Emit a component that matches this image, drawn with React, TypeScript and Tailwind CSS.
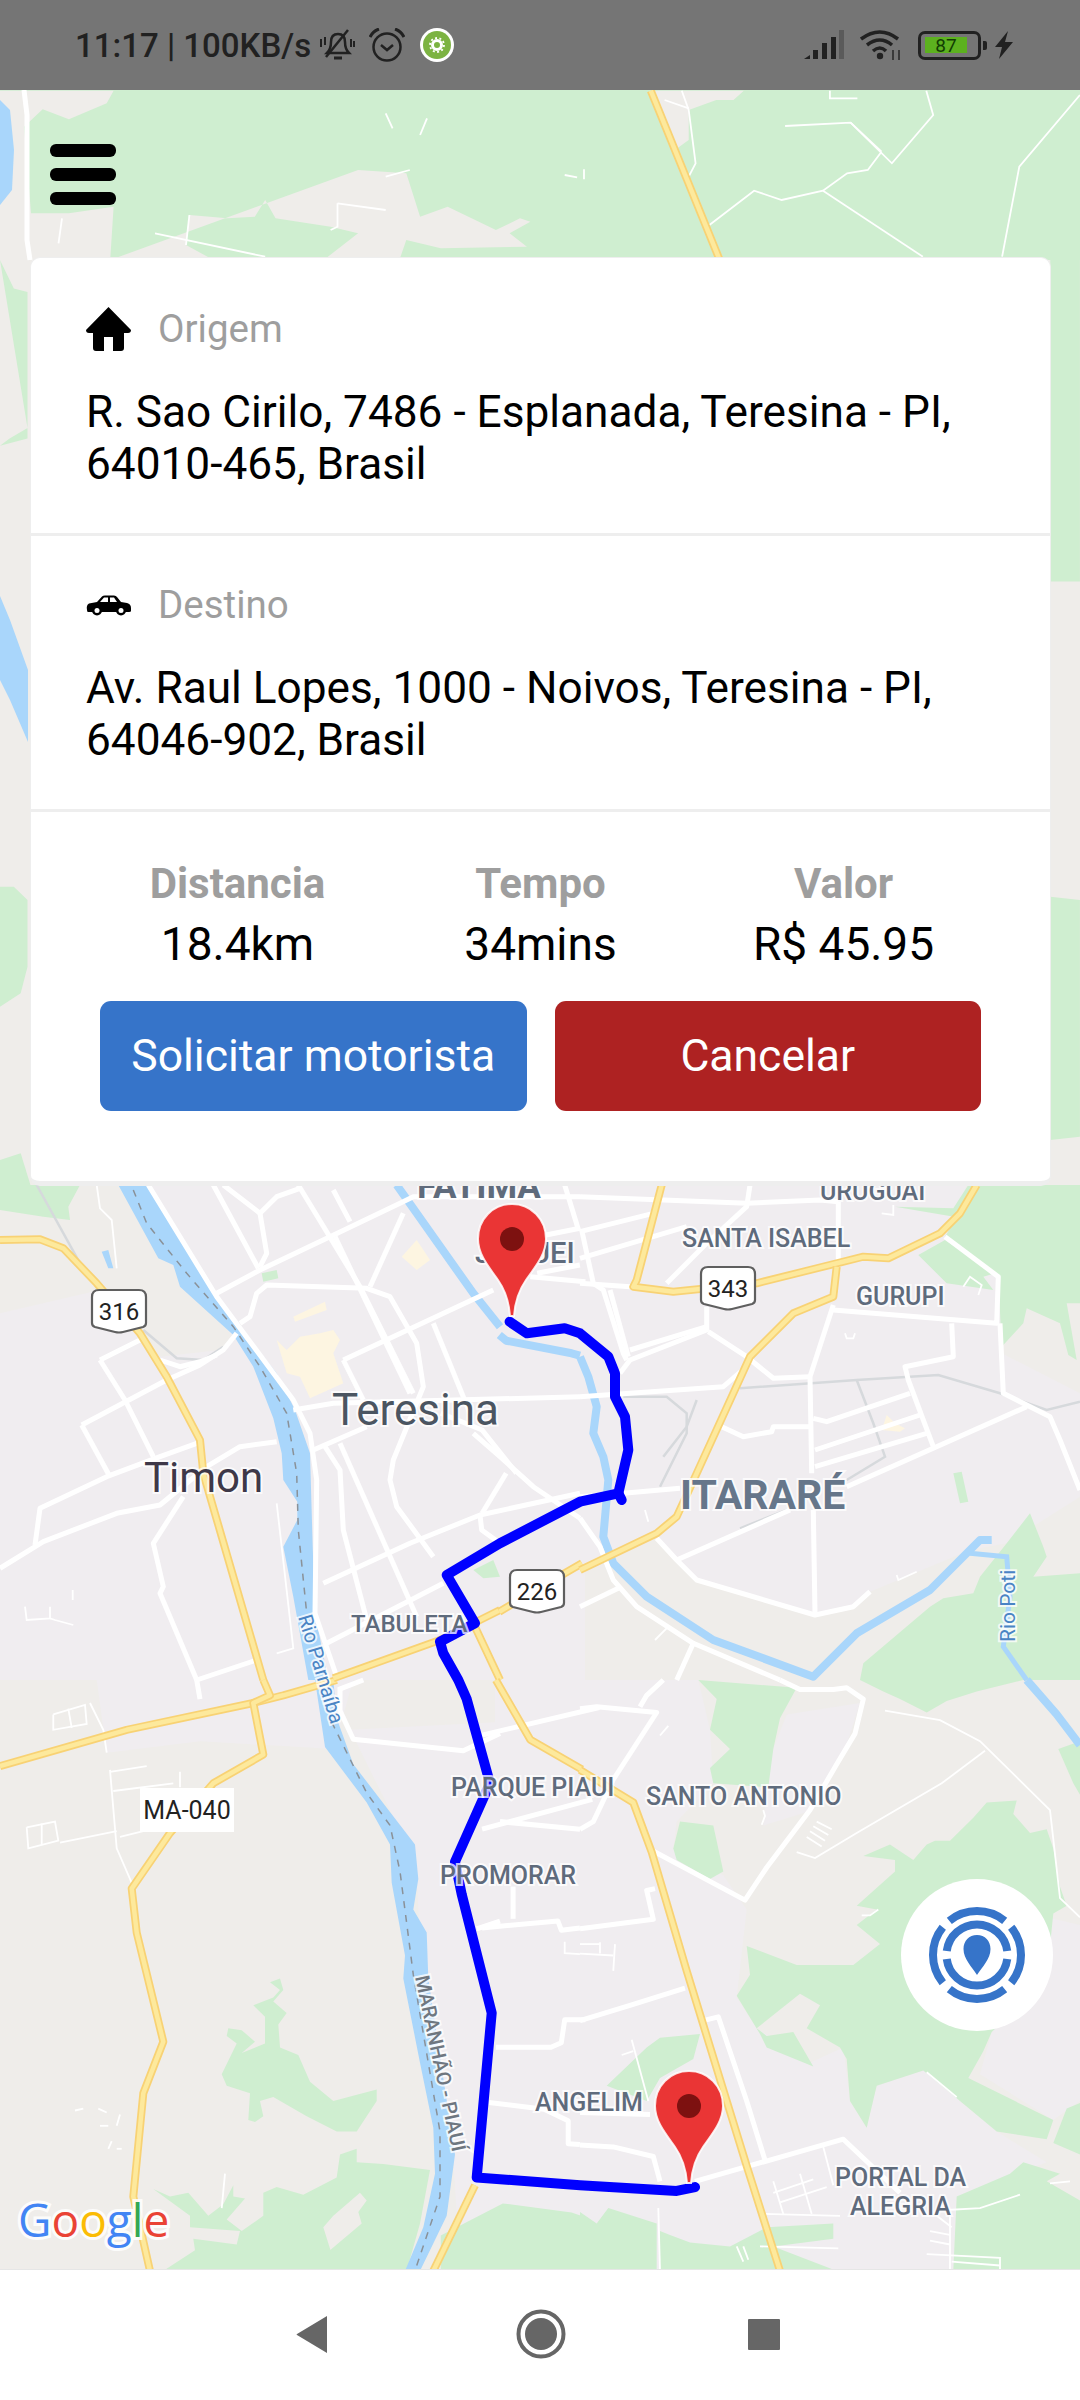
import type { ReactNode } from "react";

// the reference crops were read at different scales, so each map region has its own mapper
const region = (ox: number, oy: number, sx: number, sy: number) => (p: number[]) => {
  const out: string[] = [];
  for (let i = 0; i < p.length; i += 2) out.push(`${(ox + p[i] / sx).toFixed(1)},${(oy + p[i + 1] / sy).toFixed(1)}`);
  return out.join(" ");
};
const top = region(0, 0, 1.452, 3);
const edge = region(0, 260, 1.452, 2.8);
const edge2 = region(0, 820, 1.452, 3);
const mid = region(0, 1180, 1.452, 3);
const low = region(0, 1680, 1.452, 2.178);
const nw = region(0, 1180, 3, 3);
const ne = region(580, 1180, 3, 3);
const sw = region(0, 1680, 3, 2.613);
const se = region(580, 1680, 3, 2.613);

const GREEN = "#cfeed0";
const WATER = "#a9d6fb";
const BASE = "#efedea";
const URBAN = "#f0edf0";

const topBeige = [
  top([20, 272, 165, 272, 155, 310, 100, 358, 62, 328, 35, 380, 45, 640, 100, 640, 165, 620, 160, 780, 0, 780, 0, 272]),
  top([520, 510, 590, 520, 610, 650, 650, 620, 690, 660, 720, 690, 755, 655, 770, 665, 740, 700, 765, 740, 640, 745, 590, 720, 580, 780, 470, 780, 520, 700, 480, 680, 400, 655, 385, 600, 370, 650, 330, 655, 275, 645, 270, 735, 310, 780, 160, 780]),
  top([960, 272, 1080, 272, 1065, 300, 1040, 300, 1000, 330, 1000, 420, 980, 450, 945, 272]),
];

const urban = [
  "495,1185 585,1185 585,2270 495,2270",
  nw([360, 15, 1500, 15, 1500, 1500, 0, 1500, 0, 400, 300, 330, 400, 450, 480, 530, 660, 510, 700, 470, 520, 260]),
  ne([0, 15, 1160, 15, 1100, 175, 1260, 300, 1265, 520, 1500, 640, 1500, 950, 1280, 1090, 1170, 1110, 870, 1235, 820, 1280, 705, 1305, 350, 1200, 230, 1075, 0, 1180]),
  sw([290, 0, 1060, 0, 1000, 180, 600, 160, 320, 190]),
  sw([1050, 130, 1500, 110, 1500, 1540, 1380, 1540, 1360, 1250, 1260, 700, 1250, 500, 1170, 340]),
  se([0, 0, 355, 0, 390, 130, 400, 270, 290, 370, 280, 440, 430, 510, 500, 600, 470, 830, 530, 910, 690, 1000, 790, 960, 810, 1100, 860, 1170, 890, 1060, 1030, 1020, 1250, 1180, 1400, 1260, 1130, 1350, 1120, 1544, 0, 1544]),
  se([1400, 620, 1500, 640, 1500, 1100, 1420, 1150, 1200, 1030, 1235, 920, 1400, 780]),
  se([570, 200, 620, 90, 840, 60, 800, 170, 700, 340, 550, 380]),
];

const greens = [
  edge([0, 0, 20, 80, 40, 90, 40, 500, 0, 520, 14, 500, 40, 470]),
  edge([1525, 0, 1568, 0, 1568, 900, 1525, 900]),
  edge2([0, 200, 20, 200, 40, 240, 40, 440, 30, 520, 0, 560]),
  edge2([1525, 230, 1568, 240, 1568, 950, 1525, 960]),
  edge2([0, 1020, 30, 1000, 45, 1100, 0, 1100]),
  nw([0, 15, 240, 15, 205, 80, 210, 120, 130, 110, 0, 90]),
  nw([785, 280, 830, 270, 835, 295, 790, 305]),
  nw([1420, 1170, 1480, 1140, 1500, 1190, 1450, 1195]),
  ne([945, 80, 1120, 85, 1165, 15, 1500, 15, 1500, 370, 1460, 370, 1490, 540, 1465, 525, 1440, 430, 1340, 385, 1330, 430, 1265, 500, 1255, 290, 1095, 170, 1130, 110, 1180, 120]),
  ne([1015, 225, 1095, 180, 1245, 280, 1210, 290, 1240, 330, 1100, 310]),
  ne([1120, 880, 1145, 875, 1165, 965, 1140, 970]),
  ne([1280, 1090, 1350, 1000, 1390, 1100, 1400, 1130, 1360, 1190, 1500, 1180, 1500, 1500, 840, 1500, 850, 1450, 1050, 1280, 1090, 1255, 1180, 1240, 1200, 1190]),
  se([355, 0, 650, 20, 600, 100, 580, 180, 565, 280, 400, 270, 390, 230, 450, 180, 390, 130, 410, 50]),
  se([280, 440, 300, 370, 400, 380, 430, 500, 390, 520, 290, 470]),
  se([840, 0, 1330, 0, 1190, 30, 1100, 55, 1040, 85, 960, 50, 910, 30]),
  se([1435, 180, 1500, 160, 1500, 300, 1480, 270]),
  se([850, 460, 930, 430, 1000, 470, 1040, 430, 1065, 420, 1110, 420, 1180, 360, 1220, 320, 1310, 315, 1300, 350, 1350, 400, 1400, 390, 1420, 440, 1440, 540, 1460, 590, 1420, 610, 1400, 780, 1235, 920, 1210, 970, 1165, 1040, 1420, 1150, 1400, 1200, 1250, 1180, 1030, 1020, 890, 1060, 860, 1170, 810, 1100, 800, 990, 780, 960, 680, 910, 720, 850, 660, 820, 530, 910, 560, 930, 640, 920, 700, 1010, 560, 960, 540, 925, 470, 825, 510, 770, 500, 695, 650, 745, 820, 745, 900, 690, 830, 640, 890, 600, 830, 590, 945, 500, 945, 470]),
  se([1130, 1350, 1290, 1290, 1330, 1260, 1440, 1290, 1400, 1310, 1500, 1360, 1500, 1544, 1120, 1544]),
  se([1460, 1120, 1500, 1105, 1500, 1240, 1420, 1210]),
  se([0, 1390, 50, 1420, 85, 1380, 230, 1420, 230, 1544, 0, 1544]),
  se([240, 1440, 270, 1450, 330, 1470, 450, 1480, 560, 1430, 760, 1420, 760, 1460, 580, 1480, 770, 1544, 240, 1544]),
  se([80, 1060, 200, 960, 240, 935, 360, 925, 340, 990, 240, 1040, 200, 1100]),
  sw([810, 790, 840, 780, 850, 810, 820, 840, 860, 870, 835, 900, 840, 960, 895, 980, 930, 1050, 1000, 1100, 1130, 1070, 1130, 1100, 1070, 1180, 1010, 1180, 920, 1140, 820, 1090, 780, 1100, 790, 1140, 765, 1155, 745, 1150, 750, 1080, 680, 1060, 665, 1030, 710, 950, 680, 930, 685, 910, 725, 915, 765, 945, 725, 975, 795, 950, 795, 880, 760, 850, 820, 830, 840, 810]),
  sw([460, 1330, 510, 1350, 565, 1340, 625, 1400, 670, 1370, 700, 1320, 700, 1350, 735, 1355, 680, 1410, 725, 1440, 790, 1400, 790, 1340, 830, 1325, 910, 1345, 1010, 1300, 1020, 1240, 1070, 1225, 1070, 1260, 1150, 1265, 1290, 1280, 1260, 1420, 1220, 1544, 940, 1544, 990, 1490, 1085, 1420, 1075, 1390, 1100, 1360, 1080, 1340, 1000, 1400, 970, 1430, 995, 1500, 940, 1544, 490, 1544, 585, 1490, 580, 1460, 710, 1475, 720, 1440, 570, 1430, 570, 1400]),
  low([640, 1210, 730, 1140, 830, 1160, 850, 1170, 850, 1285, 640, 1285]),
];

const campus = [
  nw([830, 480, 860, 510, 900, 470, 960, 460, 1000, 450, 1020, 480, 1000, 520, 1030, 610, 930, 655, 900, 590, 860, 580]),
  nw([880, 410, 975, 365, 980, 390, 885, 425]),
  nw([1205, 230, 1250, 180, 1290, 240, 1250, 270]),
  ne([905, 750, 920, 705, 945, 730, 975, 745, 960, 755]),
];

const waterAreas = [
  nw([355, 15, 445, 15, 510, 130, 640, 340, 720, 440, 830, 580, 885, 690, 930, 820, 938, 1100, 945, 1300, 985, 1500, 925, 1500, 880, 1250, 850, 1100, 892, 1020, 892, 965, 850, 900, 845, 820, 820, 715, 760, 560, 700, 465, 540, 320, 520, 255, 475, 235]),
  sw([945, 0, 1000, 0, 1010, 100, 1060, 220, 1170, 345, 1245, 430, 1255, 520, 1240, 600, 1280, 660, 1285, 780, 1330, 1040, 1365, 1240, 1340, 1400, 1260, 1544, 1215, 1544, 1270, 1430, 1305, 1290, 1300, 1170, 1260, 1000, 1210, 780, 1215, 720, 1175, 530, 1170, 430, 1100, 320, 975, 175]),
  nw([305, 215, 325, 210, 340, 265, 325, 265]),
];
const waterThin = [
  nw([1190, 15, 1250, 100, 1420, 340, 1500, 440]),
  mid([725, 465, 735, 482, 830, 520, 842, 527]),
  ne([0, 530, 25, 590, 50, 680, 40, 760, 70, 830, 85, 900, 70, 1070, 100, 1150, 200, 1250, 400, 1380, 700, 1490, 830, 1360, 1050, 1230, 1170, 1110, 1200, 1080, 1235, 1080]),
  se([1340, 0, 1430, 90, 1500, 170]),
];
const waterHair = [ne([1170, 1120, 1280, 1130, 1290, 1250, 1270, 1400, 1340, 1500])];
const dashed = [
  nw([400, 30, 440, 130, 560, 280, 700, 440, 780, 560, 860, 700, 890, 880, 895, 1050, 920, 1300]),
  sw([995, 110, 1100, 295, 1170, 380, 1200, 500, 1240, 770, 1320, 1180, 1320, 1350, 1250, 1530]),
];

const whiteMajor = [
  nw([0, 1165, 130, 1085, 350, 1000, 480, 975, 620, 860, 720, 800, 830, 785]),
  nw([105, 1095, 120, 985, 320, 890, 480, 830, 590, 790]),
  nw([245, 735, 330, 890]),
  nw([245, 735, 500, 600, 600, 555, 670, 510, 710, 460]),
  nw([300, 540, 375, 660, 460, 830]),
  nw([300, 540, 420, 480]),
  nw([480, 540, 540, 560, 600, 545, 650, 525]),
  nw([445, 15, 650, 350, 880, 660, 930, 760, 950, 900, 945, 1300, 1010, 1490]),
  nw([650, 340, 780, 270, 990, 170, 1200, 70, 1240, 50, 1740, 50]),
  nw([720, 430, 750, 410, 770, 340, 800, 315, 1100, 325, 1170, 350, 1250, 490, 1270, 620, 1180, 840, 1170, 900, 1190, 980, 1300, 1130]),
  nw([640, 15, 775, 265]),
  nw([780, 100, 800, 220, 780, 260]),
  nw([670, 15, 780, 100, 830, 50, 900, 25]),
  nw([895, 15, 1080, 320, 1240, 640]),
  nw([1005, 170, 1230, 640]),
  nw([1000, 30, 1050, 125]),
  nw([1210, 100, 1110, 320]),
  nw([880, 690, 1000, 670, 1740, 650]),
  nw([940, 810, 1100, 740]),
  nw([1030, 540, 1480, 330]),
  nw([1030, 540, 1090, 660]),
  nw([1300, 430, 1410, 700]),
  nw([1420, 760, 1500, 830, 1600, 920, 1740, 1015]),
  nw([1020, 790, 1250, 1310]),
  nw([975, 800, 1020, 870, 1030, 1050, 1100, 1320]),
  nw([970, 1210, 1230, 1090, 1440, 1005, 1740, 940]),
  nw([1440, 1005, 1445, 1050, 1500, 1090]),
  nw([980, 1390, 1330, 1210]),
  nw([550, 950, 460, 1090, 490, 1220, 480, 1240, 590, 1500]),
  nw([590, 1500, 770, 1440]),
  mid([770, 290, 850, 305]),
  mid([780, 170, 842, 145]),
  mid([780, 280, 842, 255]),
  mid([820, 15, 840, 150]),
  mid([735, 880, 700, 1000]),
  mid([640, 700, 700, 750, 750, 880]),
  low([700, 120, 870, 60]),
  low([700, 325, 860, 260]),
  low([700, 540, 810, 525, 815, 545, 842, 540]),
  low([745, 450, 745, 520]),
  low([720, 800, 800, 800, 815, 790, 820, 740, 850, 740]),
  low([710, 920, 790, 935, 825, 960, 825, 1010, 842, 1012]),
  ne([0, 950, 130, 940]),
  ne([0, 50, 250, 60, 500, 70, 720, 60, 775, 65]),
  ne([510, 15, 500, 80, 380, 190, 260, 310]),
  ne([0, 155, 220, 100]),
  ne([0, 235, 320, 140]),
  ne([0, 310, 150, 320]),
  ne([775, 65, 775, 240]),
  ne([5, 150, 40, 310, 70, 330, 130, 520, 140, 540]),
  ne([90, 330, 145, 530]),
  ne([120, 580, 150, 540, 380, 450, 380, 380]),
  ne([150, 510, 380, 440]),
  ne([385, 455, 500, 530, 580, 595, 690, 590]),
  ne([0, 650, 430, 620, 500, 560]),
  ne([760, 375, 690, 590, 695, 880]),
  ne([760, 390, 1250, 430, 1255, 290, 1095, 170]),
  ne([1115, 430, 1120, 530, 975, 560, 985, 600, 1060, 800]),
  ne([1260, 430, 1270, 640, 1410, 710, 1440, 780, 1500, 930]),
  ne([1340, 680, 800, 920]),
  ne([700, 715, 740, 725, 990, 640]),
  ne([705, 810, 1020, 705]),
  ne([705, 860, 1040, 760]),
  ne([425, 740, 490, 770, 575, 755, 580, 740, 690, 740]),
  ne([130, 940, 300, 925]),
  ne([700, 990, 705, 1300]),
  ne([290, 1140, 630, 990]),
  ne([230, 1075, 290, 1140, 350, 1200, 705, 1305, 820, 1280, 870, 1235]),
  ne([0, 1015, 60, 1100, 100, 1200, 170, 1280, 340, 1390, 600, 1500]),
  ne([340, 1390, 290, 1500]),
  ne([0, 1280, 115, 1225]),
  se([0, 75, 50, 70, 230, 85, 100, 260, 40, 370, 0, 390]),
  se([180, 70, 200, 40, 250, 0]),
  se([600, 0, 660, 25, 760, 25, 800, 20, 850, 50, 825, 140, 770, 220, 690, 340, 560, 490, 495, 575, 215, 445]),
  se([225, 545, 200, 550, 220, 625, 0, 650]),
  se([315, 805, 150, 850, 0, 890]),
  se([370, 890, 415, 880, 500, 1100, 555, 1255]),
  se([345, 1310, 790, 1200, 960, 1340]),
  se([0, 1215, 100, 1220, 220, 1245, 240, 1310]),
  se([0, 1130, 210, 1135]),
  sw([1020, 20, 1020, 80, 1060, 155, 1390, 185, 1500, 140]),
  sw([590, 0, 600, 50]),
  sw([1090, 0, 1015, 25]),
  sw([1500, 370, 1740, 390]),
  sw([1500, 630, 1430, 650]),
];

const whiteThin = [
  top([1140, 378, 1235, 368, 1295, 490, 1355, 345, 1345, 272]),
  top([1235, 368, 1280, 455]),
  top([1030, 675, 1095, 572, 1135, 600, 1195, 572, 1230, 520, 1260, 510, 1280, 455]),
  top([1195, 572, 1340, 770]),
  top([1568, 285, 1480, 500, 1455, 770]),
  top([990, 272, 1000, 330, 1010, 490, 1000, 530]),
  top([965, 300, 1000, 325]),
  top([225, 700, 385, 770]),
  top([490, 610, 560, 630]),
  top([490, 610, 490, 680, 480, 690]),
  top([275, 645, 270, 735]),
  top([560, 340, 570, 385]),
  top([620, 355, 610, 405]),
  top([560, 530, 595, 510]),
  top([820, 525, 838, 532]),
  top([848, 508, 848, 538]),
  top([90, 655, 85, 730]),
  top([1205, 272, 1205, 295, 1245, 295]),
  nw([290, 15, 300, 85, 335, 120, 350, 265]),
  nw([75, 1280, 80, 1320, 150, 1315, 150, 1280]),
  nw([150, 1315, 165, 1320, 220, 1335]),
  nw([218, 1230, 218, 1260]),
  nw([830, 1420, 880, 1405, 830, 970]),
  low([820, 570, 820, 595, 842, 597]),
  ne([225, 1380, 265, 1340]),
  ne([950, 1185, 955, 1200, 1010, 1175]),
  ne([1150, 320, 1170, 290, 1205, 315, 1195, 345]),
  ne([905, 100, 940, 105, 940, 75]),
  ne([795, 460, 800, 475, 820, 475, 825, 460]),
  ne([195, 990, 205, 1025]),
  se([155, 940, 205, 1100]),
  se([125, 980, 160, 970]),
  se([60, 685, 60, 715]),
  se([105, 690, 100, 760]),
  se([0, 690, 60, 690]),
  se([0, 715, 100, 720]),
  se([235, 1380, 240, 1544]),
  se([580, 1310, 610, 1395]),
  se([660, 1290, 695, 1395]),
  se([580, 1340, 700, 1305]),
  se([600, 1365, 740, 1325]),
  se([730, 1220, 760, 1320]),
  se([550, 1395, 780, 1400]),
  se([540, 1480, 775, 1485]),
  se([1110, 1390, 1110, 1544]),
  se([1100, 1385, 1200, 1380, 1320, 1345]),
  se([1040, 1500, 1260, 1510, 1260, 1544]),
  se([1115, 1520, 1260, 1530]),
  se([1070, 1400, 1115, 1430]),
  se([1050, 1440, 1110, 1450]),
  se([1050, 1465, 1110, 1475]),
  se([650, 450, 705, 465, 830, 400, 1085, 270, 1215, 185]),
  se([915, 80, 1080, 105, 1200, 160, 1410, 340, 1440, 570, 1500, 620]),
  se([1040, 1025, 1130, 1090]),
  se([845, 615, 870, 615, 895, 600]),
  se([240, 145, 265, 120]),
  se([1410, 1315, 1470, 1310]),
  se([680, 410, 725, 435]),
  se([690, 395, 735, 420]),
  se([700, 382, 745, 405]),
  se([710, 370, 755, 390]),
  se([550, 340, 555, 355, 545, 378]),
  se([470, 1480, 490, 1520]),
  se([490, 1480, 505, 1515]),
  sw([160, 90, 160, 130, 260, 115, 255, 65, 160, 90]),
  sw([205, 75, 215, 125]),
  sw([270, 60, 310, 130, 320, 190]),
  sw([330, 235, 350, 440, 395, 530]),
  sw([330, 240, 440, 225]),
  sw([340, 290, 520, 270]),
  sw([360, 410, 430, 395]),
  sw([80, 385, 85, 440, 175, 420, 165, 370, 80, 385]),
  sw([125, 375, 125, 430]),
  sw([180, 425, 350, 395]),
  sw([540, 240, 540, 280]),
  sw([225, 1125, 250, 1120]),
  sw([295, 1120, 320, 1130]),
  sw([350, 1165, 360, 1135]),
  sw([300, 1165, 325, 1165]),
  sw([325, 1225, 335, 1205]),
  sw([350, 1225, 365, 1225]),
  sw([665, 1380, 675, 1290]),
];

const grayLines = [
  nw([110, 15, 240, 250]),
  nw([430, 450, 530, 535, 610, 540, 670, 500]),
  ne([130, 650, 260, 650, 320, 700, 320, 760, 240, 920]),
  ne([350, 660, 320, 740, 250, 830]),
  ne([480, 625, 830, 600, 1075, 585, 1260, 640, 1400, 690, 1500, 665]),
  ne([830, 600, 880, 730, 915, 830, 800, 900]),
  ne([480, 1045, 620, 990]),
];

const yellow = [
  top([945, 272, 1045, 780]),
  nw([0, 180, 120, 178, 190, 205, 290, 310, 420, 460, 500, 590, 600, 780, 610, 880, 790, 1500]),
  sw([1010, 0, 850, 40, 760, 60, 380, 130, 0, 225]),
  nw([1000, 1495, 1320, 1380, 1500, 1290]),
  mid([725, 1295, 820, 1180, 845, 1150]),
  ne([245, 15, 170, 300, 160, 320, 280, 335, 530, 310, 770, 250, 850, 230, 925, 235, 1080, 160, 1140, 100, 1190, 15]),
  ne([770, 260, 760, 350, 640, 400, 510, 530, 350, 880, 290, 1010, 230, 1060, 0, 1170]),
  nw([1420, 1330, 1500, 1500]),
  low([720, 0, 770, 130, 845, 195]),
  se([0, 235, 160, 320, 215, 450, 320, 760, 500, 1270, 600, 1544]),
  sw([790, 0, 810, 40, 760, 60, 790, 195, 640, 270, 510, 400, 395, 545, 410, 660, 490, 945, 430, 1080, 400, 1350, 450, 1544]),
  sw([1425, 1320, 1300, 1544]),
];

const route = [
  mid([740, 425, 765, 460, 820, 445]),
  ne([0, 460, 85, 530, 105, 580, 105, 650, 135, 710, 145, 810, 115, 940, 0, 965]),
  nw([1500, 1090, 1340, 1185, 1425, 1330, 1320, 1385, 1330, 1420, 1375, 1500]),
  sw([1400, 50, 1470, 270, 1365, 475, 1385, 560, 1475, 870, 1430, 1300]),
  se([0, 1320, 290, 1335, 345, 1325]),
].join(" ");
const routeTail = ne([115, 940, 125, 960]);

type MapLabelProps = { x: number; y: number; size: number; fill?: string; weight?: number; children: ReactNode; rotate?: number };

function MapLabel({ x, y, size, fill = "#5f6b7c", weight = 500, children, rotate }: MapLabelProps) {
  return (
    <text
      x={x}
      y={y}
      fontSize={size}
      fontWeight={weight}
      fill={fill}
      stroke="#ffffff"
      strokeOpacity={0.75}
      strokeWidth={4}
      transform={rotate ? `rotate(${rotate} ${x} ${y})` : undefined}
      className="[paint-order:stroke]"
      fontFamily="Roboto, sans-serif"
    >
      {children}
    </text>
  );
}

function Shield({ x, y, children }: { x: number; y: number; children: string }) {
  return (
    <g transform={`translate(${x - 28} ${y - 22})`}>
      <path d="M8 1 H48 Q55 1 55 8 V34 Q55 37 52 38 L32 43 Q28 44 24 43 L4 38 Q1 37 1 34 V8 Q1 1 8 1 Z" fill="#ffffff" stroke="#5f5f5f" strokeWidth={2.2} />
      <text x={28} y={31} textAnchor="middle" fontSize={24} fill="#222222" fontFamily="Roboto, sans-serif">
        {children}
      </text>
    </g>
  );
}

function Pin({ x, y }: { x: number; y: number }) {
  return (
    <g transform={`translate(${x - 34} ${y - 114})`}>
      <path
        d="M34 0 C15 0 0 15 0 35 C0 50 10 62 20 76 C27 86 31 98 32 112 H36 C37 98 41 86 48 76 C58 62 68 50 68 35 C68 15 53 0 34 0 Z"
        fill="#ea3535"
        stroke="#ffffff"
        strokeOpacity={0.85}
        strokeWidth={2}
      />
      <circle cx={34} cy={35} r={12} fill="#7d1110" />
    </g>
  );
}

function MapBackground() {
  return (
    <svg className="absolute inset-0" width={1080} height={2180} viewBox="0 90 1080 2180">
      <rect x={0} y={90} width={1080} height={2180} fill={BASE} />
      <rect x={0} y={90} width={1080} height={170} fill={GREEN} />
      {topBeige.map((p, i) => (
        <polygon key={i} points={p} fill={BASE} />
      ))}
      {urban.map((p, i) => (
        <polygon key={i} points={p} fill={URBAN} />
      ))}
      {greens.map((p, i) => (
        <polygon key={i} points={p} fill={GREEN} />
      ))}
      {campus.map((p, i) => (
        <polygon key={i} points={p} fill="#fdf5e1" />
      ))}

      <polygon points="0,100 10,110 14,150 12,190 0,205" fill={WATER} />
      <polygon points="0,596 10,620 28,670 28,742 10,700 0,680" fill={WATER} />
      {waterAreas.map((p, i) => (
        <polygon key={i} points={p} fill={WATER} />
      ))}
      {waterThin.map((p, i) => (
        <polyline key={i} points={p} fill="none" stroke={WATER} strokeWidth={8} strokeLinejoin="round" />
      ))}
      {waterHair.map((p, i) => (
        <polyline key={i} points={p} fill="none" stroke={WATER} strokeWidth={5} />
      ))}
      {dashed.map((p, i) => (
        <polyline key={i} points={p} fill="none" stroke="#8a9198" strokeWidth={1.5} strokeDasharray="7 7" />
      ))}

      {grayLines.map((p, i) => (
        <polyline key={i} points={p} fill="none" stroke="#d6d9dc" strokeWidth={2.5} />
      ))}
      {whiteThin.map((p, i) => (
        <polyline key={i} points={p} fill="none" stroke="#ffffff" strokeWidth={1.8} />
      ))}
      {whiteMajor.map((p, i) => (
        <polyline key={i} points={p} fill="none" stroke="#ffffff" strokeWidth={5} strokeLinejoin="round" />
      ))}
      <polyline points="24,90 27,115 27,240 30,260" fill="none" stroke="#ffffff" strokeWidth={5} />
      {yellow.map((p, i) => (
        <g key={i}>
          <polyline points={p} fill="none" stroke="#f8d274" strokeWidth={8} strokeLinejoin="round" />
          <polyline points={p} fill="none" stroke="#fde99c" strokeWidth={4.5} strokeLinejoin="round" />
        </g>
      ))}

      <polyline points={routeTail} fill="none" stroke="#0000ff" strokeWidth={10} strokeLinecap="round" />
      <polyline points={route} fill="none" stroke="#0000ff" strokeWidth={10} strokeLinejoin="round" strokeLinecap="round" />

      <MapLabel x={417} y={1198} size={35} weight={700}>FATIMA</MapLabel>
      <MapLabel x={820} y={1200} size={25}>URUGUAI</MapLabel>
      <MapLabel x={682} y={1247} size={25}>SANTA ISABEL</MapLabel>
      <MapLabel x={475} y={1263} size={29}>JOQUEI</MapLabel>
      <MapLabel x={856} y={1305} size={25}>GURUPI</MapLabel>
      <MapLabel x={332} y={1425} size={44} weight={400} fill="#4b5561">Teresina</MapLabel>
      <MapLabel x={144} y={1492} size={42} weight={400} fill="#3e3848">Timon</MapLabel>
      <MapLabel x={680} y={1509} size={41} weight={700} fill="#66768a">ITARARÉ</MapLabel>
      <MapLabel x={351} y={1632} size={24}>TABULETA</MapLabel>
      <MapLabel x={451} y={1796} size={25}>PARQUE PIAUI</MapLabel>
      <MapLabel x={646} y={1805} size={25}>SANTO ANTONIO</MapLabel>
      <MapLabel x={440} y={1884} size={25}>PROMORAR</MapLabel>
      <MapLabel x={535} y={2111} size={25}>ANGELIM</MapLabel>
      <MapLabel x={835} y={2186} size={25}>PORTAL DA</MapLabel>
      <MapLabel x={850} y={2215} size={25}>ALEGRIA</MapLabel>
      <MapLabel x={298} y={1617} size={20} weight={400} fill="#4a84c4" rotate={73}>Rio Parnaíba</MapLabel>
      <MapLabel x={1015} y={1642} size={21} weight={400} fill="#4a84c4" rotate={-90}>Rio Poti</MapLabel>
      <MapLabel x={415} y={1977} size={20} fill="#6f7780" rotate={78}>MARANHÃO - PIAUÍ</MapLabel>

      <Shield x={119} y={1311}>316</Shield>
      <Shield x={728} y={1288}>343</Shield>
      <Shield x={537} y={1591}>226</Shield>

      <rect x={140} y={1788} width={94} height={44} fill="#ffffff" />
      <text x={187} y={1819} textAnchor="middle" fontSize={25} fill="#222222" fontFamily="Roboto, sans-serif">MA-040</text>

      <Pin x={512} y={1318} />
      <Pin x={689} y={2185} />

      <text
        x={18}
        y={2237}
        fontSize={46}
        fontWeight={500}
        stroke="#ffffff"
        strokeWidth={6}
        strokeOpacity={0.85}
        className="[paint-order:stroke]"
        fontFamily="'Open Sans', sans-serif"
      >
        <tspan fill="#4285f4">G</tspan>
        <tspan fill="#ea4335">o</tspan>
        <tspan fill="#fbbc05">o</tspan>
        <tspan fill="#4285f4">g</tspan>
        <tspan fill="#34a853">l</tspan>
        <tspan fill="#ea4335">e</tspan>
      </text>
    </svg>
  );
}

function StatusBar() {
  return (
    <div className="flex h-[90px] shrink-0 items-center justify-between bg-[#757575] pl-[75px] pr-[67px] text-[#212121]">
      <div className="flex items-center">
        <span className="text-[33px] leading-none font-medium whitespace-nowrap">11:17 | 100KB/s</span>
        <svg className="ml-[8px]" width={36} height={34} viewBox="0 0 36 34" fill="none" stroke="#212121" strokeWidth={2.5}>
          <path d="M8 25 Q12 21 12 14 Q12 6 19 6 Q26 6 26 14 Q26 21 30 25 Z" />
          <path d="M15 30 H23" strokeWidth={3} />
          <path d="M29 2 L7 29" />
          <path d="M2 11 V19 M6 9 V17 M32 11 V19 M35 13 V19" strokeWidth={2} />
        </svg>
        <svg className="ml-[14px]" width={36} height={34} viewBox="0 0 36 34" fill="none" stroke="#212121" strokeWidth={2.5}>
          <circle cx={18} cy={19} r={13.5} />
          <path d="M12 17 L18 22 L24 17" />
          <path d="M1 9 Q4 3 10 1 M35 9 Q32 3 26 1" strokeWidth={3} />
        </svg>
        <svg className="ml-[15px]" width={34} height={34} viewBox="0 0 34 34">
          <circle cx={17} cy={17} r={17} fill="#ffffff" />
          <circle cx={17} cy={17} r={14} fill="#7cb342" />
          <circle cx={17} cy={17} r={4.5} fill="none" stroke="#ffffff" strokeWidth={3} />
          <circle cx={17} cy={17} r={7} fill="none" stroke="#ffffff" strokeWidth={1.8} strokeDasharray="2 2.4" />
        </svg>
      </div>
      <div className="flex items-center">
        <svg width={40} height={30} viewBox="0 0 40 30" fill="#212121">
          <path d="M0 29 L6 25 V29 Z" />
          <rect x={9} y={20} width={5} height={9} />
          <rect x={18} y={13} width={5} height={16} />
          <rect x={27} y={7} width={5} height={22} />
          <rect x={35} y={0} width={5} height={29} fill="#5a5a5a" />
        </svg>
        <svg className="ml-[16px]" width={42} height={30} viewBox="0 0 42 30" fill="none" stroke="#212121" strokeWidth={3.5}>
          <path d="M1 9 Q20 -5 38 9" />
          <path d="M7 15 Q20 5 32 15" />
          <path d="M13 21 Q20 15 26 21" />
          <circle cx={20} cy={26} r={3.2} fill="#212121" stroke="none" />
          <path d="M33 20 V30 M39 20 V30" strokeWidth={2} stroke="#3a3a3a" />
        </svg>
        <div className="ml-[16px] flex h-[29px] w-[63px] items-center rounded-[7px] border-[3px] border-[#212121] pl-[4px]">
          <span className="flex h-[16px] w-[42px] items-center justify-center bg-[#5cb11f] text-[19px] leading-none text-[#123d04]">87</span>
        </div>
        <span className="ml-[2px] h-[9px] w-[4px] rounded-r-[2px] bg-[#212121]" />
        <svg className="ml-[8px]" width={18} height={28} viewBox="0 0 18 28" fill="#212121">
          <path d="M13 0 L0 16 H7 L4 28 L18 11 H10 Z" />
        </svg>
      </div>
    </div>
  );
}

function HomeIcon() {
  return (
    <svg width={45} height={44} viewBox="0 0 45 44" fill="#000000">
      <path d="M22.5 0 L45 23 Q45 26 42 26 H38 V41 Q38 44 35 44 H27 V30 H18 V44 H10 Q7 44 7 41 V26 H3 Q0 26 0 23 Z" />
    </svg>
  );
}

function CarIcon() {
  return (
    <svg width={45} height={21} viewBox="0 0 45 21">
      <path d="M1 15 Q0 10 3 8.5 L11 7 L16 1.5 Q17 0.5 19 0.5 H28 Q30 0.5 31 2 L35 7 L41 8 Q45 9 45 13 V16 Q45 17 43 17 H2 Q1 17 1 15 Z" fill="#000000" />
      <path d="M14 7 L18 2.5 H22 V7 Z M24 2.5 H28 L31 7 H24 Z" fill="#ffffff" />
      <circle cx={11} cy={15.5} r={5} fill="#000000" />
      <circle cx={11} cy={15.5} r={2.5} fill="#ffffff" />
      <circle cx={35} cy={15.5} r={5} fill="#000000" />
      <circle cx={35} cy={15.5} r={2.5} fill="#ffffff" />
    </svg>
  );
}

function AddressBlock({ icon, label, address }: { icon: ReactNode; label: string; address: string }) {
  return (
    <div className="border-b-[3px] border-[#eeeeee] px-[55px] pt-[47px] pb-[43px]">
      <div className="flex h-[44px] items-center">
        <div className="flex w-[72px] shrink-0 items-center">{icon}</div>
        <span className="text-[38.5px] leading-none text-[#9e9e9e]">{label}</span>
      </div>
      <p className="mt-[35px] text-[44.2px] leading-[52px] text-black">{address}</p>
    </div>
  );
}

function Stat({ label, value }: { label: string; value: string }) {
  return (
    <div className="flex-1 text-center">
      <div className="text-[42px] leading-[50px] font-bold text-[#9e9e9e]">{label}</div>
      <div className="mt-[7px] text-[46px] leading-[56px] text-black">{value}</div>
    </div>
  );
}

function TripCard() {
  return (
    <div className="mt-[52px] ml-[30px] w-[1021px] rounded-[10px] border border-b-[5px] border-[#eeeeee] bg-white pt-[2px]">
      <AddressBlock
        icon={<HomeIcon />}
        label="Origem"
        address="R. Sao Cirilo, 7486 - Esplanada, Teresina - PI, 64010-465, Brasil"
      />
      <AddressBlock
        icon={<CarIcon />}
        label="Destino"
        address="Av. Raul Lopes, 1000 - Noivos, Teresina - PI, 64046-902, Brasil"
      />
      <div className="px-[55px] pt-[47px] pb-[70px]">
        <div className="flex">
          <Stat label="Distancia" value="18.4km" />
          <Stat label="Tempo" value="34mins" />
          <Stat label="Valor" value="R$ 45.95" />
        </div>
        <div className="mt-[29px] flex gap-[28px] px-[14px]">
          <button type="button" className="h-[110px] flex-1 rounded-[11px] bg-[#3674c9] text-[44.5px] text-white">
            Solicitar motorista
          </button>
          <button type="button" className="h-[110px] flex-1 rounded-[11px] bg-[#ae2222] text-[44.5px] text-white">
            Cancelar
          </button>
        </div>
      </div>
    </div>
  );
}

function LocateButton() {
  return (
    <button type="button" className="absolute top-[1789px] left-[901px] flex h-[152px] w-[152px] items-center justify-center rounded-full bg-white">
      <svg width={100} height={100} viewBox="0 0 100 100" fill="none" stroke="#3674c9" strokeWidth={8}>
        <circle cx={50} cy={50} r={44} pathLength={360} strokeDasharray="78 12" strokeDashoffset={-51} />
        <circle cx={50} cy={50} r={30.5} pathLength={360} strokeDasharray="165 15" strokeDashoffset={-7.5} />
        <path d="M50 30 C42 30 36.5 36 36.5 44 C36.5 54 45 62 50 70 C55 62 63.5 54 63.5 44 C63.5 36 58 30 50 30 Z" fill="#3674c9" stroke="none" />
      </svg>
    </button>
  );
}

function NavBar() {
  return (
    <div className="relative flex h-[130px] shrink-0 items-center bg-white pb-[2px] pl-[296px]">
      <svg width={31} height={37} viewBox="0 0 31 37" fill="#666666">
        <path d="M31 0 V37 L1 19 Q0 18.5 1 18 Z" />
      </svg>
      <svg className="ml-[189px]" width={50} height={50} viewBox="0 0 50 50">
        <circle cx={25} cy={25} r={22.5} fill="none" stroke="#666666" strokeWidth={4} />
        <circle cx={25} cy={25} r={16} fill="#666666" />
      </svg>
      <span className="ml-[182px] h-[31px] w-[32px] rounded-[1px] bg-[#666666]" />
    </div>
  );
}

export default function App() {
  return (
    <div className="flex h-[2400px] w-[1080px] flex-col overflow-hidden font-['Roboto',sans-serif]">
      <StatusBar />
      <div className="relative h-[2180px] shrink-0 overflow-hidden border-b border-[#e6e6e6]">
        <MapBackground />
        <div className="relative ml-[50px] flex w-[66px] flex-col gap-[11px] pt-[54px]">
          <span className="h-[13px] rounded-[6px] bg-black" />
          <span className="h-[13px] rounded-[6px] bg-black" />
          <span className="h-[13px] rounded-[6px] bg-black" />
        </div>
        <div className="relative">
          <TripCard />
        </div>
        <LocateButton />
      </div>
      <NavBar />
    </div>
  );
}
